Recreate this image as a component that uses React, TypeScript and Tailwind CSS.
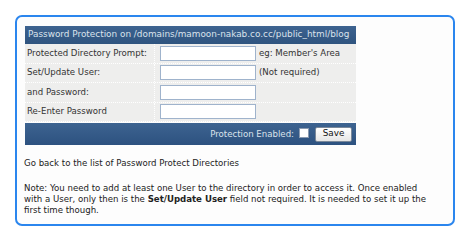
import React from "react"

const rows = [
  { label: "Protected Directory Prompt:", note: "eg: Member's Area" },
  { label: "Set/Update User:", note: "(Not required)" },
  { label: "and Password:", note: "" },
  { label: "Re-Enter Password", note: "" },
]

export default function App() {
  return (
    <div className="w-[468px] h-[242px] bg-white pt-[15px] pl-[15px] text-[8.6px] text-[#222] [font-family:'DejaVu_Sans',Verdana,sans-serif]">
      <div className="w-[440px] h-[211px] border-2 border-[#2b86ee] rounded-[7px] bg-[#fdfdfd] pt-[9px] pl-[8px]">
        <div className="w-[331px]">
          <div className="h-[18px] flex items-center pl-[3px] bg-gradient-to-b from-[#3d6390] to-[#2f547f] text-[#dbe3ec] text-[8.9px] whitespace-nowrap">
            Password Protection on /domains/mamoon-nakab.co.cc/public_html/blog
          </div>
          {rows.map((r) => (
            <div
              key={r.label}
              className="h-[19.5px] flex items-center bg-[#eeeeed] border-b border-dotted border-white text-[#333]"
            >
              <div className="w-[130px] h-full flex items-center pl-[2px] border-r border-dotted border-white whitespace-nowrap">
                {r.label}
              </div>
              <div className="w-[103px] flex items-center pl-[5px]">
                <div className="w-[96px] h-[15px] bg-white border border-[#9fb3cc]" />
              </div>
              <div className="pl-[1px] whitespace-nowrap">{r.note}</div>
            </div>
          ))}
          <div className="mt-[1px] h-[22px] flex items-center justify-end pr-[4px] bg-gradient-to-b from-[#3d6390] to-[#2d5280] text-[#dbe3ec]">
            <span>Protection Enabled:</span>
            <span className="ml-[5px] w-[10px] h-[10px] bg-white border border-[#8a9ab0] mb-[3px]" />
            <span className="ml-[6px] w-[37px] h-[15px] flex items-center justify-center bg-gradient-to-b from-white to-[#e6e6e6] border border-[#7a8899] rounded-[2px] text-[#111] text-[8.8px]">
              Save
            </span>
          </div>
        </div>
        <div className="-ml-[1px] mt-[13px] leading-[11px] text-[#222] whitespace-nowrap">
          <p>Go back to the list of Password Protect Directories</p>
          <p className="mt-[14px]">
            Note: You need to add at least one User to the directory in order to access it. Once enabled
            <br />
            with a User, only then is the <b>Set/Update User</b> field not required. It is needed to set it up the
            <br />
            first time though.
          </p>
        </div>
      </div>
    </div>
  )
}
